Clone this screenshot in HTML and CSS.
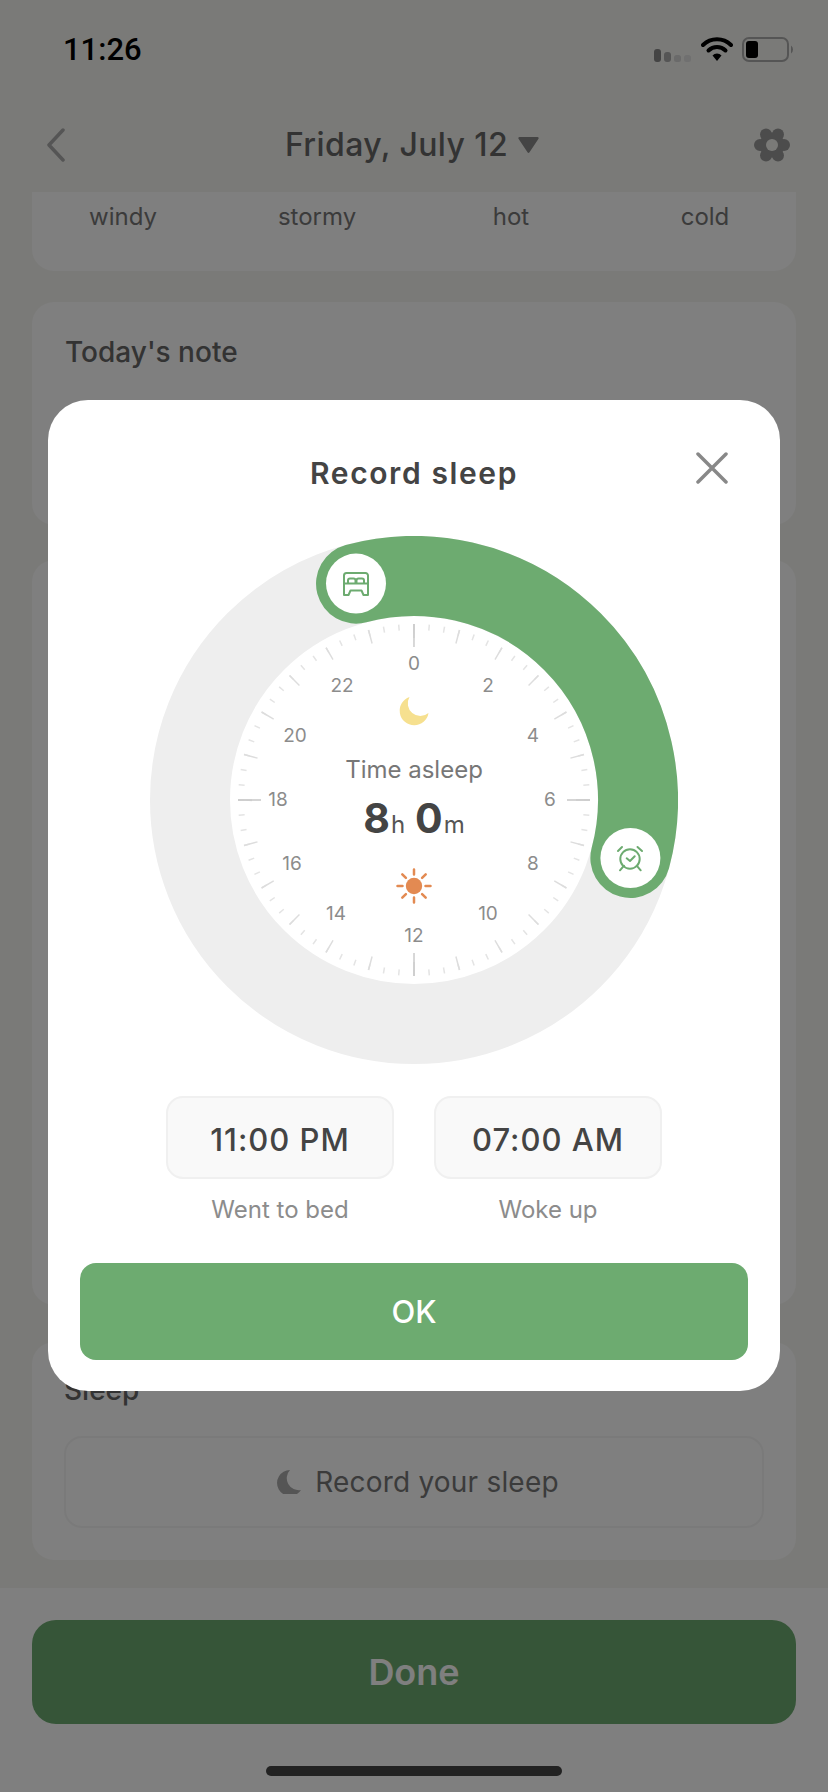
FILE: index.html
```html
<!DOCTYPE html>
<html lang="en">
  <head>
    <meta charset="UTF-8" />
    <meta name="viewport" content="width=device-width, initial-scale=1.0" />
    <title>Record sleep</title>
    <link rel="stylesheet" href="styles.css">
  </head>
  <body>
    <div class="page">
      <div class="statusBar">
        <span class="statusTime">11:26</span>
        <div class="statusIcons">
          <svg width="38" height="13" viewBox="0 0 38 13">
            <rect x="0" y="0" width="7" height="13" rx="3" fill="#888"/>
            <rect x="10" y="3" width="7" height="10" rx="3" fill="#aaa"/>
            <rect x="20" y="6" width="7" height="7" rx="2.5" fill="#d4d4d4"/>
            <rect x="30" y="6" width="7" height="7" rx="2.5" fill="#e0e0e0"/>
          </svg>
          <svg width="32" height="25" viewBox="0 0 32 25">
            <path d="M2 8a20 20 0 0 1 28 0" fill="none" stroke="#000" stroke-width="4" stroke-linecap="round"/>
            <path d="M7.500 13.500a12 12 0 0 1 17 0" fill="none" stroke="#000" stroke-width="4" stroke-linecap="round"/>
            <path d="M11.500 18.500a6 6 0 0 1 9 0L16 24z"/>
          </svg>
          <svg width="53" height="25" viewBox="0 0 53 25">
            <rect x="1" y="1" width="45" height="23" rx="6" fill="none" stroke="#aaa" stroke-width="2"/>
            <rect x="4" y="4" width="12" height="17" rx="3"/>
            <path d="M49 8.500a5 5 0 0 1 0 8z" fill="#aaa"/>
          </svg>
        </div>
      </div>

      <div class="topBar">
        <svg class="backIcon" width="20" height="34" viewBox="0 0 20 34">
          <path d="M17 2L3 17l14 15" fill="none" stroke="#aaa" stroke-width="3.500" stroke-linecap="round" stroke-linejoin="round"/>
        </svg>
        <div class="dateTitle">
          Friday, July 12
          <svg width="21" height="16" viewBox="0 0 21 16"><path d="M1.500 0h18a1.200 1.200 0 0 1 1 1.800l-9 13.400a1.200 1.200 0 0 1-2 0L.5 1.800A1.200 1.200 0 0 1 1.500 0z" fill="#888"/></svg>
        </div>
        <svg class="gearIcon" width="36" height="36" viewBox="0 0 36 36">
          <g fill="#999">
            <circle cx="18" cy="18" r="12.500"/>
            <circle cx="30" cy="18" r="6"/>
            <circle cx="6" cy="18" r="6"/>
            <circle cx="24" cy="7.600" r="6"/>
            <circle cx="12" cy="7.600" r="6"/>
            <circle cx="24" cy="28.400" r="6"/>
            <circle cx="12" cy="28.400" r="6"/>
          </g>
          <circle cx="18" cy="18" r="6" fill="#f5f5f1"/>
        </svg>
      </div>

      <div class="scrollArea">
        <div class="card weatherCard">
          <div class="weatherRow">
            <span>windy</span>
            <span>stormy</span>
            <span>hot</span>
            <span>cold</span>
          </div>
        </div>
        <div class="card noteCard">
          <h2 class="cardTitle">Today's note</h2>
        </div>
        <div class="card hiddenCard"></div>
        <div class="card sleepCard">
          <h2 class="cardTitle">Sleep</h2>
          <div class="recordBtn">
            <svg width="24" height="24" viewBox="0 0 24 24"><path d="M13 0A13 13 0 1 0 24 20 12 12 0 0 1 13 0z" fill="#aaa"/></svg>
            Record your sleep
          </div>
        </div>
      </div>

      <div class="bottomBar">
        <div class="doneBtn">Done</div>
        <div class="homeBar"></div>
      </div>
    </div>

    <div class="overlay">
      <div class="modal">
        <h1 class="modalTitle">Record sleep</h1>
        <svg class="closeIcon" width="32" height="32" viewBox="0 0 32 32">
          <path d="M2 2l28 28M30 2L2 30" stroke="#888" stroke-width="3.500" stroke-linecap="round"/>
        </svg>

        <div class="dial">
          <svg class="dialFace" width="528" height="528" viewBox="0 0 528 528">
            <circle class="ring" cx="264" cy="264" r="224"/>
            <path class="ringActive" d="M206.030 47.630A224 224 0 0 1 480.370 321.970"/>

            <g transform="rotate(-90.25 264 264)">
              <circle class="tick tickSmall" cx="264" cy="264" r="173" pathLength="360"/>
              <circle class="tick tickMid" cx="264" cy="264" r="169" pathLength="360"/>
              <circle class="tick tickBig" cx="264" cy="264" r="164.500" pathLength="360"/>
            </g>

            <g class="hours">
              <text x="264" y="127">0</text>
              <text x="338" y="149">2</text>
              <text x="383" y="199">4</text>
              <text x="400" y="263">6</text>
              <text x="383" y="327">8</text>
              <text x="338" y="377">10</text>
              <text x="264" y="399">12</text>
              <text x="186" y="377">14</text>
              <text x="142" y="327">16</text>
              <text x="128" y="263">18</text>
              <text x="145" y="199">20</text>
              <text x="192" y="149">22</text>
            </g>

            <!-- moon -->
            <path d="M259.500 161A14.500 14.500 0 1 0 278.500 177A12.600 12.600 0 0 1 259.500 161z" fill="#f6e08f"/>

            <!-- sun -->
            <g class="sunRays">
              <circle cx="264" cy="350" r="8.200" fill="#e38a52" stroke="none"/>
              <path d="M264 333.500v5M264 361.500v5M247.500 350h5M275.500 350h5M252.300 338.300l3.600 3.600M272.100 358.100l3.600 3.600M275.700 338.300l-3.600 3.600M255.900 358.100l-3.600 3.600"/>
            </g>

            <!-- bed handle -->
            <circle class="handle" cx="206" cy="47.600" r="30"/>
            <g class="handleIcon">
              <path d="M194 59V39.500a2.500 2.500 0 0 1 2.500-2.500h19a2.500 2.500 0 0 1 2.500 2.500V59h-4.500l-2-4.500h-11l-2 4.500z"/>
              <path d="M194 47.500h24M198 47v-2.500a2 2 0 0 1 2-2h3.500a2 2 0 0 1 2 2V47M206.500 47v-2.500a2 2 0 0 1 2-2h3.500a2 2 0 0 1 2 2V47"/>
            </g>

            <!-- alarm handle -->
            <circle class="handle" cx="480.400" cy="322" r="30"/>
            <g class="handleIcon">
              <circle cx="480" cy="323" r="9.700"/>
              <path d="M476.700 322.300l3.300 2.700 4.700-4.700"/>
              <path d="M468 315l4-4M492 315l-4.500-4M474 329.700l-4 4.600M486.700 329.700l4 4.600"/>
            </g>
          </svg>

          <div class="dialCenter">
            <div class="asleepLabel">Time asleep</div>
            <div class="asleepValue"><b>8</b><span>h</span> <b>0</b><span>m</span></div>
          </div>
        </div>

        <div class="timeRow">
          <div class="timeCol">
            <div class="timeBox">11:00 PM</div>
            <div class="timeLabel">Went to bed</div>
          </div>
          <div class="timeCol">
            <div class="timeBox">07:00 AM</div>
            <div class="timeLabel">Woke up</div>
          </div>
        </div>

        <button class="okBtn">OK</button>
      </div>
    </div>
  </body>
</html>
```

FILE: styles.css
```css
* {
  box-sizing: border-box;
}

body {
  margin: 0;
  width: 828px;
  height: 1792px;
  overflow: hidden;
  position: relative;
  background-color: #f5f5f1;
  font-family: Inter, "Noto Sans", sans-serif;
  color: #666;
}

.page {
  height: 100%;
  display: flex;
  flex-direction: column;
}

.statusBar {
  height: 90px;
  padding: 32px 33px 0 63px;
  display: flex;
  justify-content: space-between;
  align-items: flex-start;
}

.statusTime {
  font-family: Roboto, sans-serif;
  font-size: 31px;
  line-height: 36px;
  font-weight: 500;
  color: #000;
}

.statusIcons {
  display: flex;
  align-items: flex-end;
  gap: 9px;
  padding-top: 5px;
}

.topBar {
  height: 102px;
  padding: 7px 38px 0 46px;
  display: flex;
  justify-content: space-between;
  align-items: center;
}

.dateTitle {
  display: flex;
  align-items: center;
  gap: 10px;
  margin-left: 4px;
  font-size: 32px;
  font-weight: 500;
  letter-spacing: 0.4px;
}

.scrollArea {
  height: 1396px;
  padding: 0 32px;
  display: flex;
  flex-direction: column;
  overflow: hidden;
}

.card {
  background-color: #fefefe;
  border-radius: 22px;
  flex-shrink: 0;
}

.weatherCard {
  height: 79px;
  border-radius: 0 0 22px 22px;
  padding-top: 8px;
}

.weatherRow {
  margin: 0 -6px;
  display: grid;
  grid-template-columns: repeat(4, 194px);
  text-align: center;
  font-size: 24px;
  line-height: 34px;
  color: #777;
}

.noteCard {
  height: 223px;
  margin-top: 31px;
  padding: 32px 33px;
}

.hiddenCard {
  height: 745px;
  margin-top: 35px;
}

.sleepCard {
  height: 218px;
  margin-top: 37px;
  padding: 30px 32px;
}

.cardTitle {
  margin: 0;
  font-size: 28px;
  line-height: 36px;
  font-weight: 500;
}

.recordBtn {
  height: 92px;
  margin-top: 28px;
  padding-left: 8px;
  display: flex;
  justify-content: center;
  align-items: center;
  gap: 14px;
  border: 2px solid #f5f5f5;
  border-radius: 18px;
  font-size: 28px;
  letter-spacing: 0.2px;
  color: #777;
}

.bottomBar {
  flex: 1;
  background-color: #ffffff;
  padding: 32px 32px 0;
}

.doneBtn {
  height: 104px;
  border-radius: 24px;
  background-color: #6dab70;
  color: #fff;
  display: flex;
  justify-content: center;
  align-items: center;
  font-size: 36px;
  font-weight: 600;
}

.homeBar {
  width: 296px;
  height: 10px;
  margin: 42px auto 0;
  border-radius: 5px;
  background-color: #444;
}

.overlay {
  position: absolute;
  inset: 0;
  background-color: rgba(0, 0, 0, 0.5);
  padding-top: 400px;
  display: flex;
  justify-content: center;
  align-items: flex-start;
}

.modal {
  position: relative;
  width: 732px;
  height: 991px;
  padding: 48px 32px 31px;
  background-color: #fff;
  border-radius: 40px;
  display: flex;
  flex-direction: column;
  align-items: center;
}

.modalTitle {
  margin: 0;
  font-size: 30px;
  line-height: 50px;
  font-weight: 600;
  letter-spacing: 1.6px;
  color: #444;
}

.closeIcon {
  position: absolute;
  top: 52px;
  right: 52px;
}

.dial {
  position: relative;
  width: 528px;
  height: 528px;
  margin-top: 38px;
  flex-shrink: 0;
}

.dialFace {
  display: block;
}

.ring {
  fill: #fff;
  stroke: #eeeeee;
  stroke-width: 80;
}

.ringActive {
  fill: none;
  stroke: #6dab70;
  stroke-width: 80;
  stroke-linecap: round;
}

.tick {
  fill: none;
}

.tickSmall {
  stroke: #e4e4e4;
  stroke-width: 6;
  stroke-dasharray: 0.5 4.5;
}

.tickMid {
  stroke: #dddddd;
  stroke-width: 14;
  stroke-dasharray: 0.5 14.5;
}

.tickBig {
  stroke: #c8c8c8;
  stroke-width: 23;
  stroke-dasharray: 0.5 89.5;
}

.hours text {
  font-size: 19px;
  fill: #8c8c8c;
  text-anchor: middle;
  dominant-baseline: central;
}

.sunRays {
  stroke: #e38a52;
  stroke-width: 2.5;
  stroke-linecap: round;
}

.handle {
  fill: #fff;
}

.handleIcon {
  fill: none;
  stroke: #6dab70;
  stroke-width: 2;
  stroke-linecap: round;
  stroke-linejoin: round;
}

.dialCenter {
  position: absolute;
  left: 0;
  right: 0;
  top: 216px;
  text-align: center;
}

.asleepLabel {
  font-size: 24px;
  line-height: 36px;
  color: #777;
}

.asleepValue {
  margin-top: 4px;
  font-size: 24px;
  line-height: 52px;
  word-spacing: 3px;
  color: #555;
}

.asleepValue b {
  font-size: 41px;
  font-weight: 700;
  color: #444;
}

.asleepValue span {
  margin-left: 1px;
}

.timeRow {
  margin-top: 32px;
  display: flex;
  gap: 40px;
}

.timeCol {
  width: 228px;
  text-align: center;
}

.timeBox {
  height: 83px;
  padding-top: 3px;
  display: flex;
  justify-content: center;
  align-items: center;
  background-color: #f9f9f9;
  border: 2px solid #f0f0f0;
  border-radius: 17px;
  font-size: 31px;
  font-weight: 500;
  letter-spacing: 1px;
  color: #444;
}

.timeLabel {
  margin-top: 16px;
  font-size: 24px;
  line-height: 30px;
  color: #8c8c8c;
}

.okBtn {
  width: 668px;
  height: 97px;
  margin-top: 38px;
  border: none;
  border-radius: 16px;
  background-color: #6dab70;
  color: #fff;
  font-family: inherit;
  font-size: 31px;
  font-weight: 500;
}
```
